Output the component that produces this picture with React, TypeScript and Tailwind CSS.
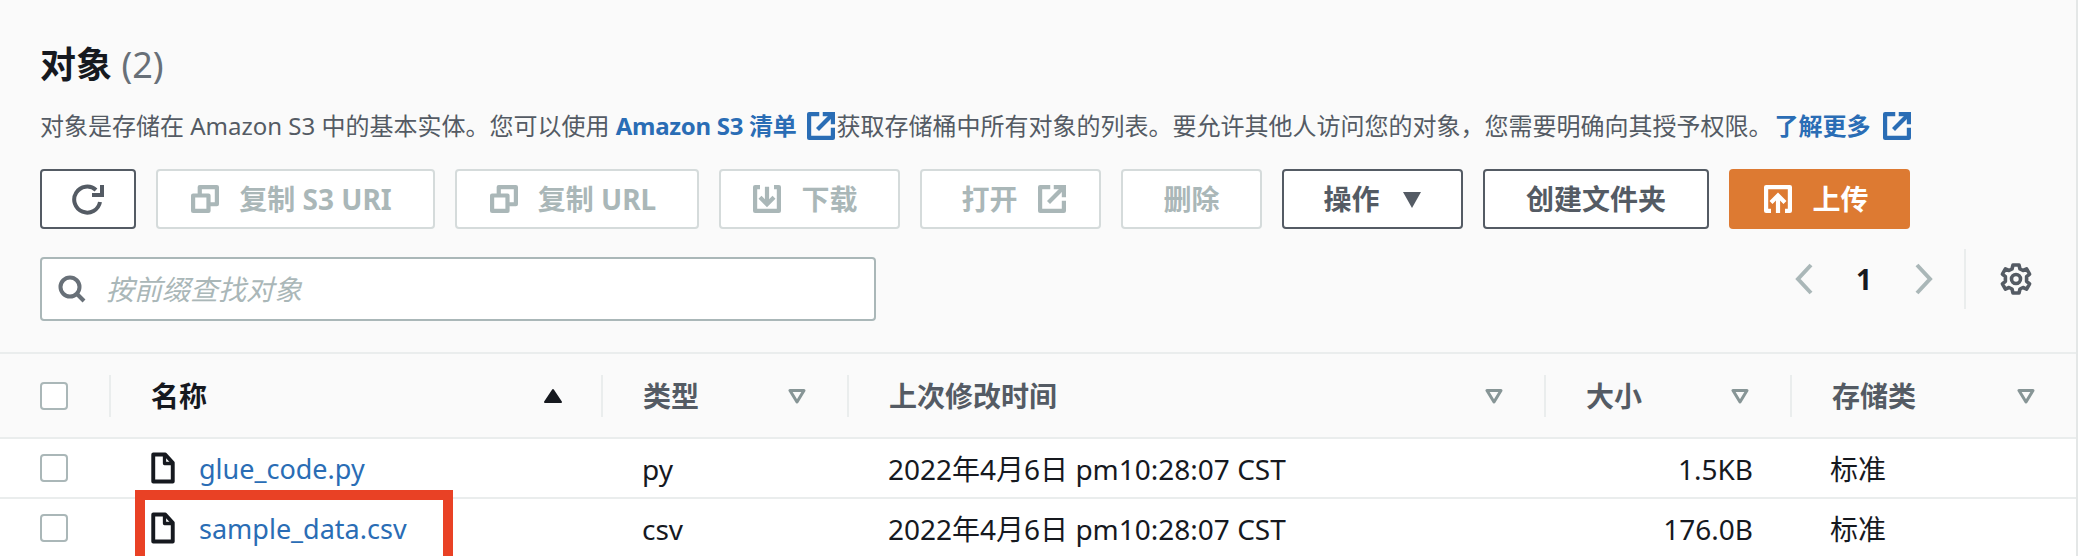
import type { ReactNode } from "react";

const font = "font-['Noto_Sans','Noto_Sans_CJK_SC',sans-serif]";

const Svg = ({ children, className }: { children: ReactNode; className?: string }) => (
  <svg viewBox="0 0 16 16" fill="none" stroke="currentColor" strokeWidth="2.4" className={className}>
    {children}
  </svg>
);

const ExternalIcon = ({ className }: { className?: string }) => (
  <Svg className={className}>
    <path d="M7 1.2H1.2v13.6h13.6V9" strokeLinejoin="round" />
    <path d="M9 1.2h5.8V7" />
    <path d="M14.8 1.2 6 10" />
  </Svg>
);

const CopyIcon = ({ className }: { className?: string }) => (
  <Svg className={className}>
    <path d="M1.2 6h8.8v8.8H1.2z" strokeLinejoin="round" />
    <path d="M5 6V1.2h9.8V11H10" strokeLinejoin="round" />
  </Svg>
);

const DownloadIcon = ({ className }: { className?: string }) => (
  <Svg className={className}>
    <path d="M4 1.2H1.2v13.6h13.6V1.2H12" strokeLinejoin="round" />
    <path d="M8 1v9" />
    <path d="M4 7l4 4 4-4" />
  </Svg>
);

const UploadIcon = ({ className }: { className?: string }) => (
  <Svg className={className}>
    <path d="M4 14.8H1.2V1.2h13.6v13.6H12" strokeLinejoin="round" />
    <path d="M8 16V7" />
    <path d="M4 10l4-4 4 4" />
  </Svg>
);

const FileIcon = () => (
  <svg viewBox="0 0 16 21" fill="none" stroke="#16191f" strokeWidth="2.6" strokeLinejoin="round" className="w-6 h-8 shrink-0">
    <path d="M1.5 1.5h8l5 5.5v12.5h-13z" />
    <path d="M9 1.5V7.5h5.5" strokeWidth="2.2" />
  </svg>
);

const Caret = ({ up }: { up?: boolean }) =>
  up ? (
    <svg viewBox="0 0 20 16" className="w-[22px] h-4 text-[#16191f]">
      <path d="M10 2 18 14H2z" fill="currentColor" stroke="currentColor" strokeWidth="2" strokeLinejoin="round" />
    </svg>
  ) : (
    <svg viewBox="0 0 20 16" className="w-[22px] h-4 text-[#879596]">
      <path d="M3 2.5h14L10 14z" fill="none" stroke="currentColor" strokeWidth="3" strokeLinejoin="round" />
    </svg>
  );

const Checkbox = () => (
  <div className="w-[28px] h-[28px] rounded-[4px] border-2 border-[#aab7b8] bg-white" />
);

const DisabledButton = ({ children, className }: { children: ReactNode; className?: string }) => (
  <div className={`h-[60px] flex items-center justify-center gap-[20px] rounded-[4px] border-2 border-[#d5dbdb] bg-white text-[#aab7b8] text-[28px] font-bold ${className}`}>
    {children}
  </div>
);

const headers = [
  { label: "名称", w: "w-[492px]", pr: "pr-[37px]", active: true },
  { label: "类型", w: "w-[246px]", pr: "pr-[39px]" },
  { label: "上次修改时间", w: "w-[697px]", pr: "pr-[39px]" },
  { label: "大小", w: "w-[246px]", pr: "pr-[39px]" },
  { label: "存储类", w: "w-[286px]", pr: "pr-[39px]" },
];

const rows = [
  { name: "glue_code.py", type: "py", size: "1.5KB" },
  { name: "sample_data.csv", type: "csv", size: "176.0B", marked: true },
];

export default function App() {
  return (
    <div className={`${font} relative w-[2078px] h-[556px] overflow-hidden bg-[#fafafa] text-[#16191f] border-r-2 border-[#e4e7e7]`}>
      <div className="pl-[40px] pr-[165px] pt-[41px]">
        <h1 className="h-[48px] leading-[48px] text-[36px] font-bold">
          对象 <span className="font-normal text-[#687078]">(2)</span>
        </h1>
        <p className="mt-[19px] h-[36px] leading-[36px] text-[24px] whitespace-nowrap text-[#545b64]">
          对象是存储在 Amazon S3 中的基本实体。您可以使用{" "}
          <span className="font-bold text-[#2a6db5] tracking-[-0.3px]">Amazon S3 清单</span>
          <ExternalIcon className="inline-block ml-[11px] mr-[1px] w-[28px] h-[28px] align-[-5px] text-[#2a6db5]" />
          获取存储桶中所有对象的列表。要允许其他人访问您的对象，您需要明确向其授予权限。
          <span className="font-bold text-[#2a6db5] ml-[2px]">了解更多</span>
          <ExternalIcon className="inline-block ml-[13px] w-[28px] h-[28px] align-[-5px] text-[#2a6db5]" />
        </p>
        <div className="mt-[25px] flex gap-[20px]">
          <div className="w-[96px] h-[60px] flex items-center justify-center rounded-[4px] border-2 border-[#545b64] bg-white text-[#545b64]">
            <svg viewBox="0 0 32 32" fill="none" stroke="currentColor" strokeWidth="4" className="w-[32px] h-[32px]">
              <path d="M28 19a13 13 0 1 1-4-12" />
              <path d="M30 2v10H20" fill="none" />
            </svg>
          </div>
          <DisabledButton className="w-[279px] pr-[8px]">
            <CopyIcon className="w-[28px] h-[28px]" />
            <span>复制 S3 URI</span>
          </DisabledButton>
          <DisabledButton className="w-[244px] pr-[8px]">
            <CopyIcon className="w-[28px] h-[28px]" />
            <span>复制 URL</span>
          </DisabledButton>
          <DisabledButton className="w-[181px] pr-[8px]">
            <DownloadIcon className="w-[28px] h-[28px]" />
            <span>下载</span>
          </DisabledButton>
          <DisabledButton className="w-[181px] pl-[6px]">
            <span>打开</span>
            <ExternalIcon className="w-[28px] h-[28px]" />
          </DisabledButton>
          <DisabledButton className="w-[141px]">
            <span>删除</span>
          </DisabledButton>
          <div className="w-[181px] h-[60px] flex items-center justify-center gap-[22px] rounded-[4px] border-2 border-[#545b64] bg-white text-[#545b64] text-[28px] font-bold">
            <span>操作</span>
            <svg viewBox="0 0 20 20" className="w-[20px] h-[20px]">
              <path d="M1 3h18L10 19z" fill="currentColor" />
            </svg>
          </div>
          <div className="w-[226px] h-[60px] flex items-center justify-center rounded-[4px] border-2 border-[#545b64] bg-white text-[#545b64] text-[28px] font-bold">
            创建文件夹
          </div>
          <div className="w-[181px] h-[60px] flex items-center justify-center gap-[20px] pr-[6px] rounded-[4px] bg-[#dd7a32] text-white text-[28px] font-bold">
            <UploadIcon className="w-[28px] h-[28px]" />
            <span>上传</span>
          </div>
        </div>
      </div>

      <div className="pl-[40px] mt-[20px] h-[103px] flex items-start">
        <div className="w-[836px] h-[64px] mt-[8px] flex items-center rounded-[4px] border-2 border-[#aab7b8] bg-white">
          <svg viewBox="0 0 28 28" fill="none" stroke="#687078" strokeWidth="4" className="ml-[16px] w-[28px] h-[30px]">
            <circle cx="12" cy="12" r="9.5" />
            <path d="M18 18l8 8" />
          </svg>
          <span className="ml-[20px] text-[28px] italic text-[#aab7b8]">按前缀查找对象</span>
        </div>
        <div className="ml-auto flex items-center h-[60px] text-[#aab7b8]">
          <svg viewBox="0 0 20 32" fill="none" stroke="currentColor" strokeWidth="4" className="w-[20px] h-[32px]">
            <path d="M17 2 4 16l13 14" />
          </svg>
          <span className="w-[100px] text-center text-[28px] font-bold text-[#16191f]">1</span>
          <svg viewBox="0 0 20 32" fill="none" stroke="currentColor" strokeWidth="4" className="w-[20px] h-[32px]">
            <path d="M3 2l13 14L3 30" />
          </svg>
          <div className="ml-[30px] w-[2px] h-[60px] bg-[#eaeded]" />
          <svg viewBox="0 0 32 32" fill="none" stroke="#545b64" strokeWidth="3.6" strokeLinejoin="round" className="ml-[34px] mr-[44px] w-[32px] h-[32px]">
            <path d="M13 2h6l1 4 3 1.5 3.6-1.6 3 5.2-3 2.6v4.6l3 2.6-3 5.2-3.6-1.6L20 26l-1 4h-6l-1-4-3-1.5-3.6 1.6-3-5.2 3-2.6v-4.6l-3-2.6 3-5.2L9 7.5 12 6z" />
            <circle cx="16" cy="16" r="4.5" />
          </svg>
        </div>
      </div>

      <div className="h-[87px] flex items-center border-y-2 border-[#eaeded]">
        <div className="w-[109px] flex items-center pl-[40px]">
          <Checkbox />
        </div>
        {headers.map((h) => (
          <div key={h.label} className={`${h.w} ${h.pr} h-[42px] pl-[40px] flex items-center justify-between border-l-2 border-[#eaeded]`}>
            <span className={`text-[28px] font-bold ${h.active ? "text-[#16191f]" : "text-[#545b64]"}`}>{h.label}</span>
            <Caret up={h.active} />
          </div>
        ))}
      </div>

      {rows.map((r) => (
        <div key={r.name} className="relative h-[60px] flex items-center bg-white border-b-2 border-[#eaeded] text-[28px]">
          <div className="w-[109px] flex items-center pl-[40px]">
            <Checkbox />
          </div>
          <div className="w-[492px] flex items-center gap-[24px] pl-[42px]">
            <FileIcon />
            <span className="pt-[2px] text-[27px] text-[#2a6db5]">{r.name}</span>
          </div>
          <div className="w-[246px] pt-[2px] pl-[41px]">{r.type}</div>
          <div className="w-[697px] pt-[2px] pl-[41px]">2022年4月6日 pm10:28:07 CST</div>
          <div className="w-[246px] pt-[2px] pr-[37px] text-right">{r.size}</div>
          <div className="w-[286px] pt-[2px] pl-[40px]">标准</div>
          {r.marked && (
            <div className="absolute left-[135px] top-[-9px] w-[318px] h-[72px] border-[10px] border-b-[3px] border-[#e94125]" />
          )}
        </div>
      ))}
    </div>
  );
}
